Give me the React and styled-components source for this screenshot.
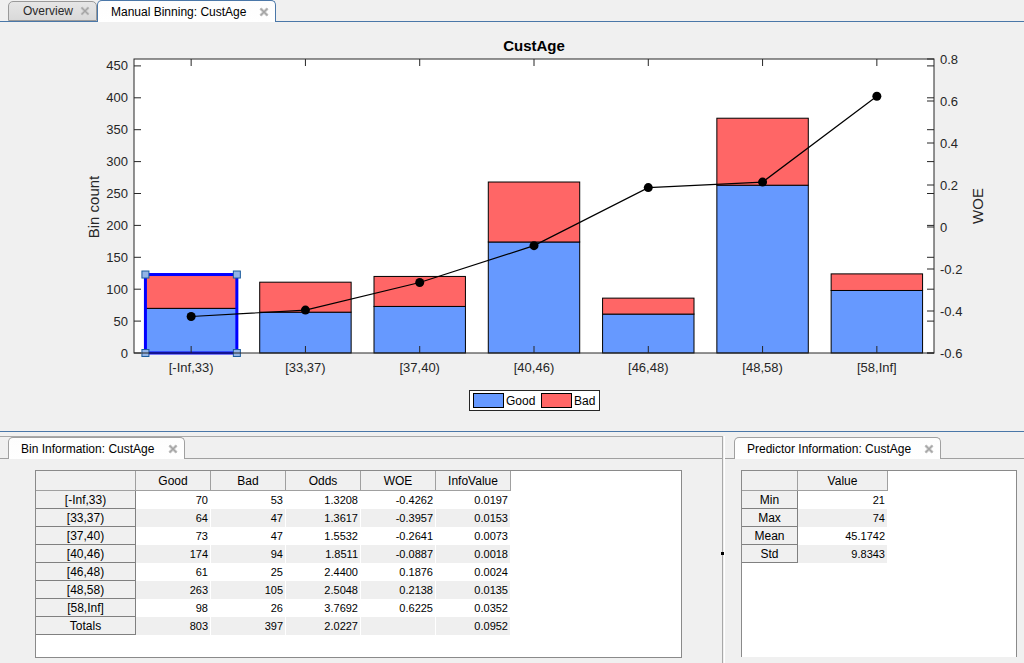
import React from 'react';
import styled, { createGlobalStyle } from 'styled-components';

const GlobalStyle = createGlobalStyle`
  html, body {
    margin: 0;
    padding: 0;
    background: #f0f0f0;
    font-family: "Liberation Sans", Arial, sans-serif;
    overflow: hidden;
  }
`;

const Page = styled.div`
  width: 1024px;
  height: 663px;
  display: flex;
  flex-direction: column;
  background: #f0f0f0;
`;

const TabStrip = styled.div`
  display: flex;
  align-items: flex-end;
  height: 22px;
  padding-left: ${(p) => p.$pl || 8}px;
  box-sizing: border-box;
  border-bottom: 1px solid ${(p) => p.$line || '#4a77a8'};
  flex-shrink: 0;
`;

const Tab = styled.div`
  display: flex;
  align-items: center;
  justify-content: space-between;
  width: ${(p) => p.$w}px;
  height: ${(p) => (p.$active ? 22 : 20)}px;
  padding: 0 6px 0 ${(p) => p.$pl || 13}px;
  box-sizing: border-box;
  margin-bottom: ${(p) => (p.$active ? -1 : 0)}px;
  border: 1px solid ${(p) => (p.$active ? p.$edge || '#4a77a8' : '#9a9a9a')};
  border-bottom: ${(p) => (p.$active ? 'none' : '1px solid #9a9a9a')};
  border-radius: 5px 5px 0 0;
  background: ${(p) =>
    p.$active
      ? 'linear-gradient(#fdfdfd, #ffffff)'
      : 'linear-gradient(#e6e6e6, #d9d9d9)'};
  font-size: 12px;
  color: ${(p) => (p.$active ? '#000' : '#2a2a2a')};
  white-space: nowrap;
  flex-shrink: 0;
`;

const Close = () => (
  <svg width="10" height="10" viewBox="0 0 10 10">
    <path d="M1.5 1.5 L8.5 8.5 M8.5 1.5 L1.5 8.5" stroke="#cccccc" strokeWidth="3" />
    <path d="M1.5 1.5 L8.5 8.5 M8.5 1.5 L1.5 8.5" stroke="#a4a4a4" strokeWidth="1.3" />
  </svg>
);

const ChartPane = styled.div`
  height: 409px;
  flex-shrink: 0;
  border-bottom: 1px solid #4a77a8;
`;

const Gap = styled.div`
  height: 4px;
  flex-shrink: 0;
`;

const Bottom = styled.div`
  flex: 1;
  display: flex;
  min-height: 0;
`;

const Panel = styled.div`
  width: ${(p) => (p.$w ? `${p.$w}px` : 'auto')};
  flex: ${(p) => (p.$w ? '0 0 auto' : '1')};
  display: flex;
  flex-direction: column;
  border-top: ${(p) => (p.$topLine ? '1px solid #a8a8a8' : 'none')};
  padding-top: ${(p) => (p.$topLine ? 0 : 1)}px;
  min-width: 0;
`;

const PanelBody = styled.div`
  flex: 1;
  padding: 11px ${(p) => p.$pr}px 6px ${(p) => p.$pl}px;
  min-height: 0;
`;

const Splitter = styled.div`
  position: relative;
  width: 3px;
  flex-shrink: 0;
  border-left: 1px solid #a8a8a8;
  border-right: 1px solid #ffffff;
  box-sizing: border-box;
`;

const Grip = styled.div`
  position: absolute;
  left: -2px;
  top: 116px;
  width: 3px;
  height: 3px;
  background: #000;
`;

const TableBox = styled.div`
  height: ${(p) => (p.$h ? `${p.$h}px` : '100%')};
  box-sizing: border-box;
  border: 1px solid #8a8a8a;
  border-bottom: ${(p) => (p.$open ? 'none' : '1px solid #8a8a8a')};
  background: #fff;
  overflow: hidden;
`;

const Grid = styled.table`
  border-collapse: collapse;
  table-layout: fixed;
  margin: -1px 0 0 -1px;
`;

const HeadCell = styled.th`
  width: ${(p) => p.$w}px;
  height: 20px;
  padding: 0;
  box-sizing: border-box;
  background: #f0f0f0;
  border: 1px solid #a0a0a0;
  font-weight: normal;
  font-size: 12px;
  color: #000;
  text-align: center;
`;

const RowHead = styled.th`
  height: 18px;
  padding: 0;
  box-sizing: border-box;
  background: #f0f0f0;
  border: 1px solid #808080;
  font-weight: normal;
  font-size: 12px;
  color: #000;
  text-align: center;
`;

const Cell = styled.td`
  height: 18px;
  padding: 0 2px 0 0;
  box-sizing: border-box;
  background: ${(p) => (p.$alt ? '#efefef' : '#ffffff')};
  border-right: 1px solid #ffffff;
  font-size: 11px;
  color: #000;
  text-align: right;
`;

const ChartText = styled.text`
  font-family: "Liberation Sans", Arial, sans-serif;
  font-size: ${(p) => p.$size || 13}px;
  font-weight: ${(p) => (p.$bold ? 'bold' : 'normal')};
  fill: ${(p) => p.$color || '#262626'};
`;

const labels = ['[-Inf,33)', '[33,37)', '[37,40)', '[40,46)', '[46,48)', '[48,58)', '[58,Inf]'];
const good = [70, 64, 73, 174, 61, 263, 98];
const bad = [53, 47, 47, 94, 25, 105, 26];
const woe = [-0.4262, -0.3957, -0.2641, -0.0887, 0.1876, 0.2138, 0.6225];

const X0 = 134;
const X1 = 934;
const Y0 = 59;
const Y1 = 353;
const STEP = (X1 - X0) / 7;
const BW = STEP * 0.8;
const yL = (v) => Y1 - v * 0.638;
const yR = (w) => Y1 - (w + 0.6) * 210;
const cx = (i) => X0 + STEP * (i + 0.5);

function Chart() {
  const leftTicks = [0, 50, 100, 150, 200, 250, 300, 350, 400, 450];
  const rightTicks = [-0.6, -0.4, -0.2, 0, 0.2, 0.4, 0.6, 0.8];
  const sel = { x: cx(0) - BW / 2, y: yL(good[0] + bad[0]), w: BW, h: (good[0] + bad[0]) * 0.638 };
  return (
    <svg width="1024" height="409" viewBox="0 22 1024 409" style={{ display: 'block' }}>
      <rect x={X0} y={Y0} width={X1 - X0} height={Y1 - Y0} fill="#fff" />
      {good.map((g, i) => (
        <g key={i}>
          <rect x={cx(i) - BW / 2} y={yL(g)} width={BW} height={g * 0.638} fill="#6699ff" stroke="#000" strokeWidth="1" />
          <rect x={cx(i) - BW / 2} y={yL(g + bad[i])} width={BW} height={bad[i] * 0.638} fill="#ff6666" stroke="#000" strokeWidth="1" />
        </g>
      ))}
      <rect x={sel.x} y={sel.y} width={sel.w} height={sel.h} fill="none" stroke="#0000ff" strokeWidth="3" />
      {[[sel.x, sel.y], [sel.x + sel.w, sel.y], [sel.x, sel.y + sel.h], [sel.x + sel.w, sel.y + sel.h]].map(([x, y], i) => (
        <rect key={i} x={x - 3.5} y={y - 3.5} width="7" height="7" fill="#93b4e6" stroke="#1c5d9c" strokeWidth="1" />
      ))}
      <polyline
        points={woe.map((w, i) => `${cx(i)},${yR(w)}`).join(' ')}
        fill="none"
        stroke="#000"
        strokeWidth="1.2"
      />
      {woe.map((w, i) => (
        <circle key={i} cx={cx(i)} cy={yR(w)} r="4.5" fill="#000" />
      ))}
      <rect x={X0} y={Y0} width={X1 - X0} height={Y1 - Y0} fill="none" stroke="#262626" strokeWidth="1" />
      {labels.map((l, i) => (
        <g key={l}>
          <line x1={cx(i)} y1={Y0} x2={cx(i)} y2={Y0 + 7} stroke="#262626" />
          <line x1={cx(i)} y1={Y1} x2={cx(i)} y2={Y1 - 7} stroke="#262626" />
          <ChartText x={cx(i)} y={372} textAnchor="middle">{l}</ChartText>
        </g>
      ))}
      {leftTicks.map((t) => (
        <g key={t}>
          <line x1={X0} y1={yL(t)} x2={X0 + 7} y2={yL(t)} stroke="#262626" />
          <line x1={X1} y1={yL(t)} x2={X1 - 7} y2={yL(t)} stroke="#262626" />
          <ChartText x={128} y={yL(t) + 4.5} textAnchor="end">{t}</ChartText>
        </g>
      ))}
      {rightTicks.map((t) => (
        <g key={t}>
          <line x1={X1} y1={yR(t)} x2={X1 - 7} y2={yR(t)} stroke="#262626" />
          <ChartText x={940} y={yR(t) + 4.5}>{t === 0 ? '0' : t.toFixed(1)}</ChartText>
        </g>
      ))}
      <ChartText x={534} y={51} textAnchor="middle" $size={15} $bold $color="#000">CustAge</ChartText>
      <ChartText x={99} y={207} textAnchor="middle" $size={15} transform="rotate(-90 99 207)">Bin count</ChartText>
      <ChartText x={983} y={206} textAnchor="middle" $size={15} transform="rotate(-90 983 206)">WOE</ChartText>
      <rect x="469.5" y="390.5" width="130" height="20" fill="#fff" stroke="#262626" />
      <rect x="473.5" y="393.5" width="30" height="14" fill="#6699ff" stroke="#000" />
      <ChartText x={506} y={405} $size={12} $color="#000">Good</ChartText>
      <rect x="541.5" y="393.5" width="30" height="14" fill="#ff6666" stroke="#000" />
      <ChartText x={574} y={405} $size={12} $color="#000">Bad</ChartText>
    </svg>
  );
}

const fmt = (v) => v.toFixed(4);

function BinTable() {
  const info = ['0.0197', '0.0153', '0.0073', '0.0018', '0.0024', '0.0135', '0.0352'];
  const rows = labels.map((l, i) => [l, good[i], bad[i], fmt(good[i] / bad[i]), fmt(woe[i]), info[i]]);
  rows.push(['Totals', 803, 397, '2.0227', '', '0.0952']);
  const cols = ['Good', 'Bad', 'Odds', 'WOE', 'InfoValue'];
  return (
    <TableBox $h={188}>
      <Grid>
        <thead>
          <tr>
            <HeadCell $w={100} />
            {cols.map((c) => (
              <HeadCell key={c} $w={75}>{c}</HeadCell>
            ))}
          </tr>
        </thead>
        <tbody>
          {rows.map((r, i) => (
            <tr key={r[0]}>
              <RowHead>{r[0]}</RowHead>
              {r.slice(1).map((v, j) => (
                <Cell key={j} $alt={i % 2 === 1}>{v}</Cell>
              ))}
            </tr>
          ))}
        </tbody>
      </Grid>
    </TableBox>
  );
}

function PredictorTable() {
  const rows = [['Min', '21'], ['Max', '74'], ['Mean', '45.1742'], ['Std', '9.8343']];
  return (
    <TableBox $open>
      <Grid>
        <thead>
          <tr>
            <HeadCell $w={56} />
            <HeadCell $w={90}>Value</HeadCell>
          </tr>
        </thead>
        <tbody>
          {rows.map((r, i) => (
            <tr key={r[0]}>
              <RowHead>{r[0]}</RowHead>
              <Cell $alt={i % 2 === 1}>{r[1]}</Cell>
            </tr>
          ))}
        </tbody>
      </Grid>
    </TableBox>
  );
}

export default function App() {
  return (
    <Page>
      <GlobalStyle />
      <TabStrip>
        <Tab $w={89} $pl={14}>
          Overview
          <Close />
        </Tab>
        <Tab $active $w={179} $pl={13}>
          Manual Binning: CustAge
          <Close />
        </Tab>
      </TabStrip>
      <ChartPane>
        <Chart />
      </ChartPane>
      <Gap />
      <Bottom>
        <Panel $w={722} $topLine>
          <TabStrip $line="#a0a0a0">
            <Tab $active $edge="#a0a0a0" $w={177} $pl={12}>
              Bin Information: CustAge
              <Close />
            </Tab>
          </TabStrip>
          <PanelBody $pl={35} $pr={40}>
            <BinTable />
          </PanelBody>
        </Panel>
        <Splitter>
          <Grip />
        </Splitter>
        <Panel>
          <TabStrip $line="#a0a0a0" $pl={9}>
            <Tab $active $edge="#a0a0a0" $w={207} $pl={12}>
              Predictor Information: CustAge
              <Close />
            </Tab>
          </TabStrip>
          <PanelBody $pl={16} $pr={7}>
            <PredictorTable />
          </PanelBody>
        </Panel>
      </Bottom>
    </Page>
  );
}
